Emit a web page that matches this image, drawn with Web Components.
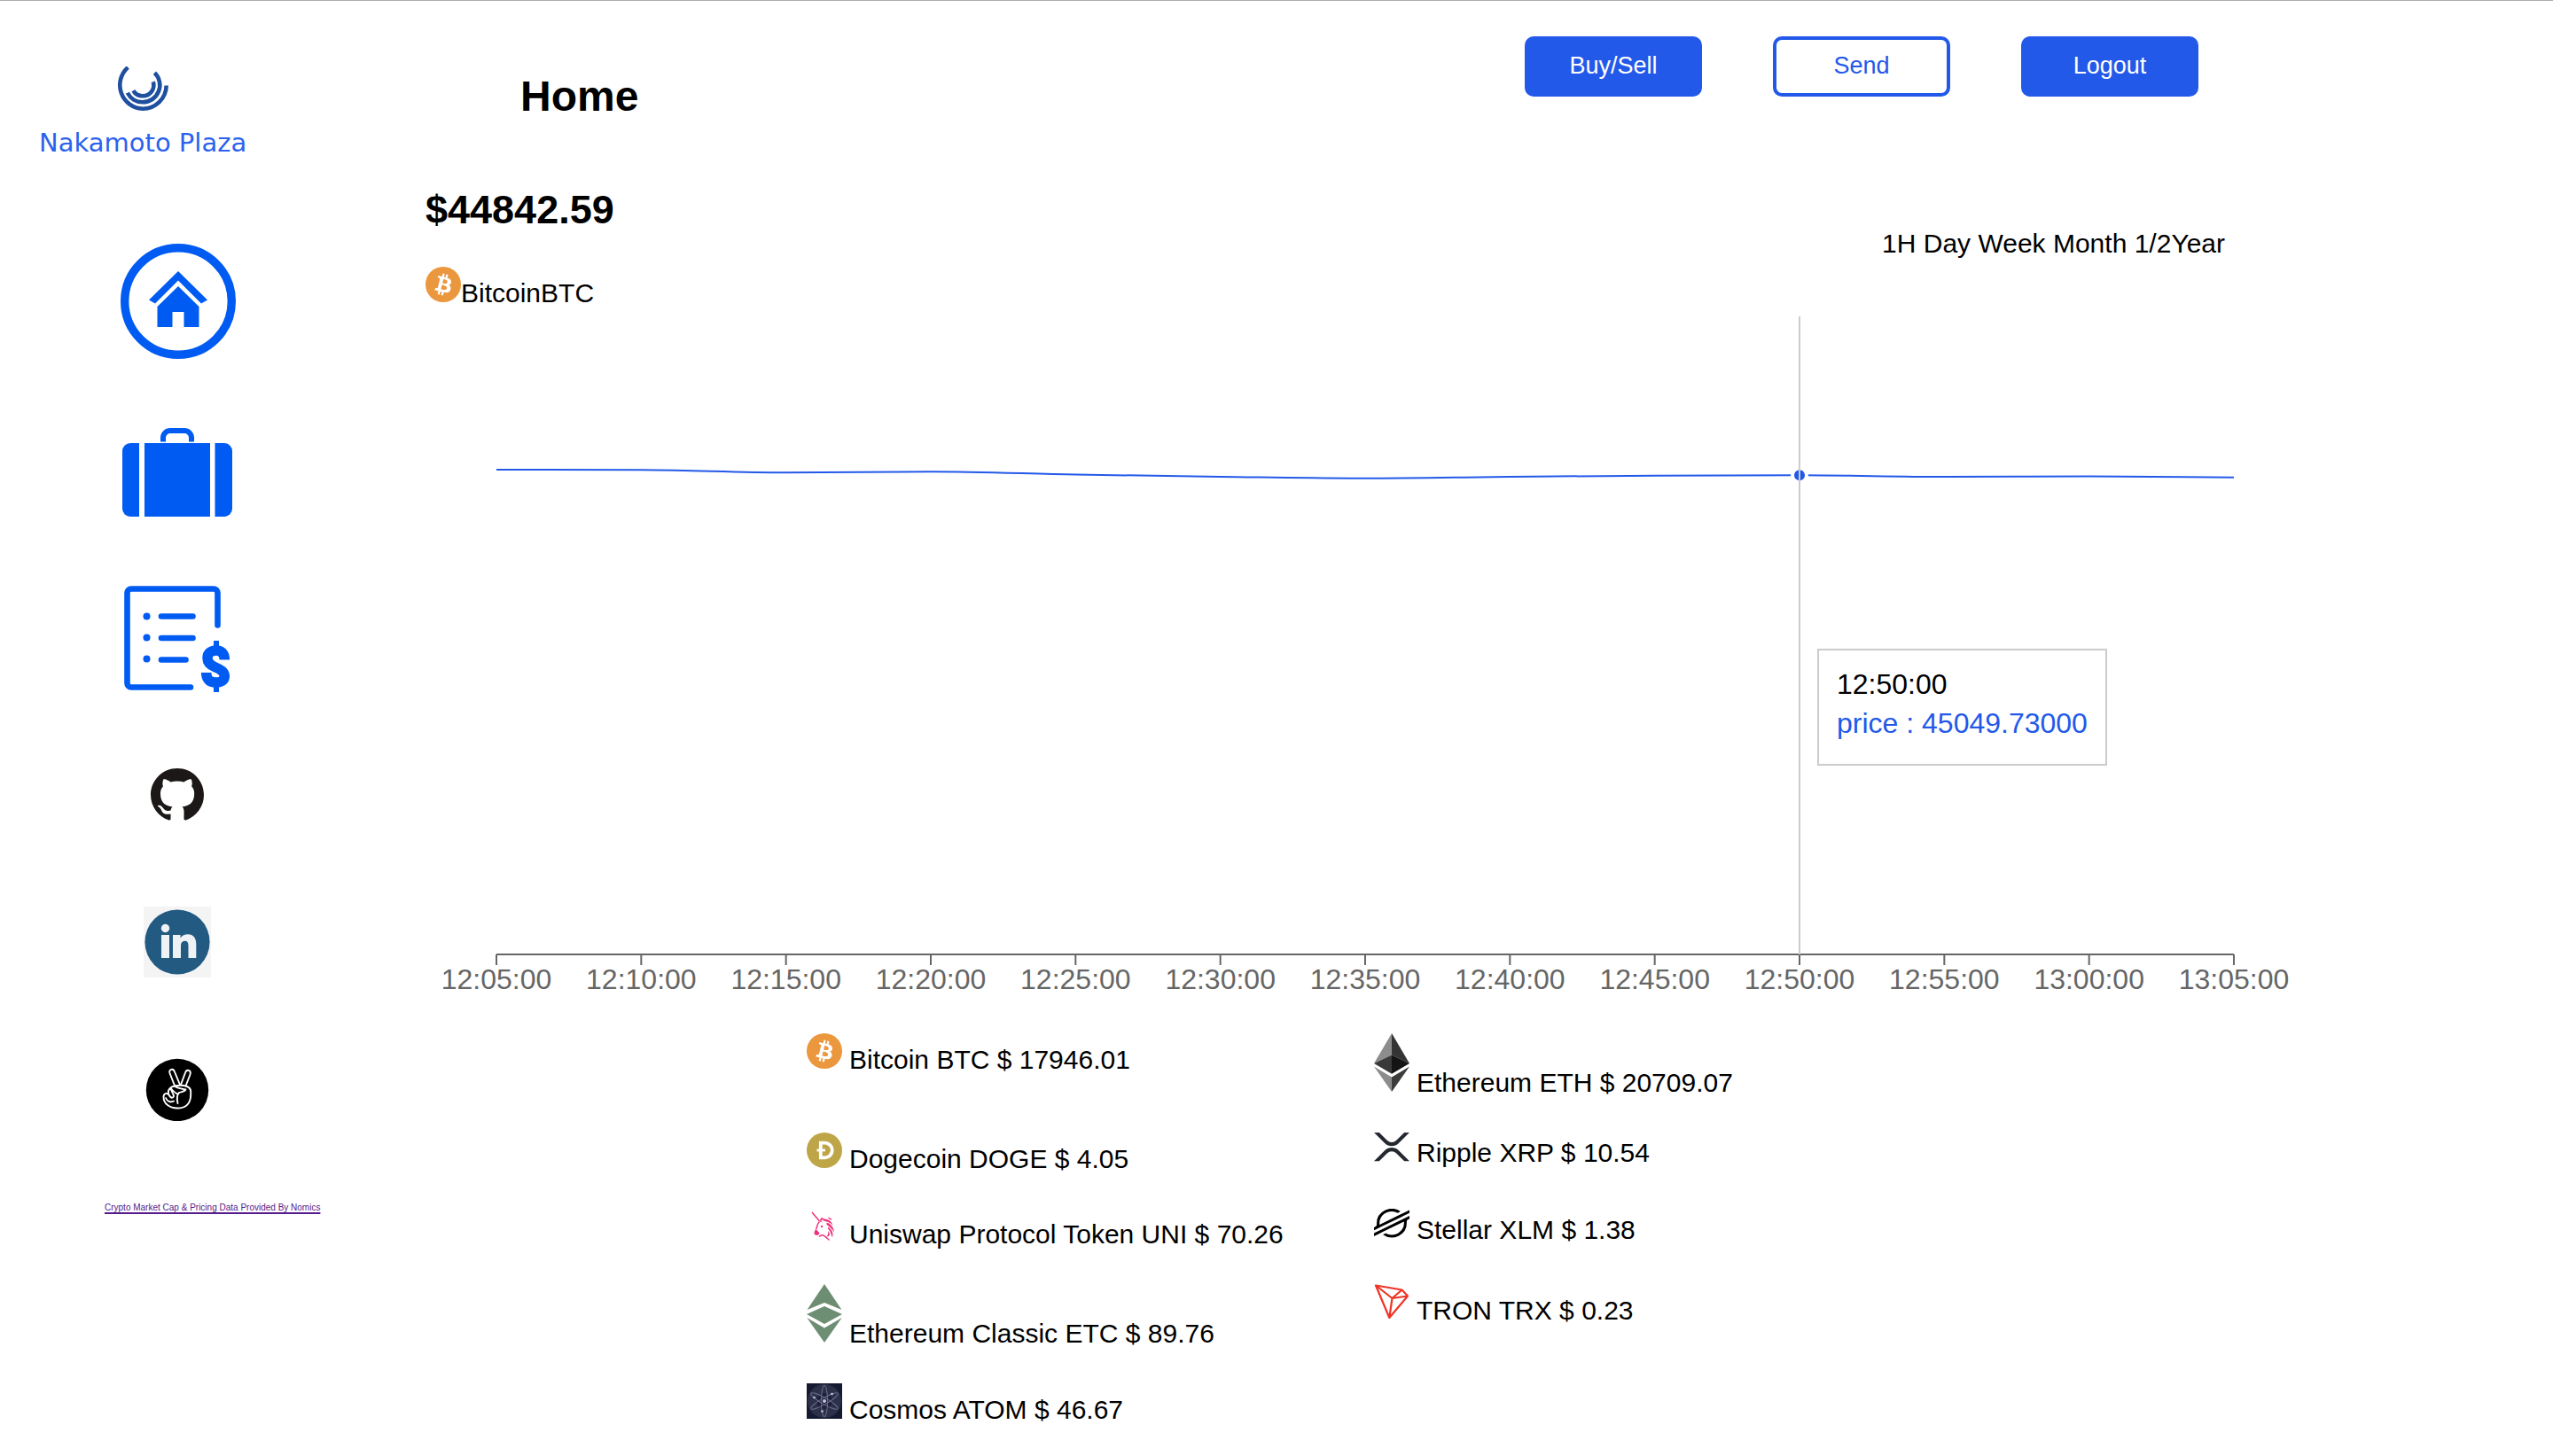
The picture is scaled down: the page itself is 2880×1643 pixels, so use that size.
<!DOCTYPE html>
<html lang="en">
<head>
<meta charset="utf-8">
<title>Nakamoto Plaza</title>
<style>
  html, body { margin: 0; background: #fff; }
  body { font-family: "Liberation Sans", Arial, sans-serif; color: #000; }
</style>
</head>
<body>
<np-app></np-app>

<script>
const ICONS = {
  logo: [58, 50, `<g fill="none" stroke="#1f4f9f" stroke-width="4.6"><path d="M12.300 1A26.700 26.700 0 0 0 29 47.700A26.700 26.700 0 0 0 55.700 21.500"/><path d="M11.800 29.800A19.300 19.300 0 0 0 29 40.300A19.300 19.300 0 0 0 42.400 7.100"/><path d="M18.300 27.300A12.300 12.300 0 0 0 29 33.300A12.300 12.300 0 0 0 40.800 17.300"/></g>`],
  home: [132, 130, `<g transform="translate(2 0)"><circle cx="65" cy="65" r="60.300" fill="none" stroke="#005bf3" stroke-width="9.400"/><g fill="#005bf3"><path d="M65 31 98 63.500 91 67.500 65 41.500 39 67.500 32 63.500Z"/><path d="M65 48 88.500 71V94H71.500V77H58.500V94H41.500V71Z"/></g></g>`],
  portfolio: [124, 100, `<g fill="#005bf3"><path d="M9 17H19V100H9a9 9 0 0 1-9-9V26a9 9 0 0 1 9-9Z"/><path d="M25 17H99V100H25Z"/><path d="M104.500 17H115a9 9 0 0 1 9 9V91a9 9 0 0 1-9 9H104.500Z"/></g><path d="M46 15.500V11a8 8 0 0 1 8-8H70a8 8 0 0 1 8 8V15.500" fill="none" stroke="#005bf3" stroke-width="6"/>`],
  ledger: [124, 120, `<g fill="none" stroke="#005bf3" stroke-width="6.600" stroke-linecap="round"><path d="M107.500 44.500V8a4.500 4.500 0 0 0-4.500-4.500H10A4.500 4.500 0 0 0 5.500 8V110a4.500 4.500 0 0 0 4.500 4.500H77"/><path d="M44 34.500H79.500M44 59H79.500M44 83.500H71.500"/></g><g fill="#005bf3"><circle cx="27.500" cy="34.500" r="4"/><circle cx="27.500" cy="58.500" r="4"/><circle cx="27.500" cy="82.500" r="4"/><path d="M103 62H109V70H103ZM103 111H109V120H103Z"/></g><path d="M115.300 83.500C115.300 76 111 73 106 73C99.500 73 96 76.500 96 81.500C96 87.500 100 90 105 92C111 94.500 115.300 97 115.300 102C115.300 107 111 109 105.500 109C98.500 109 94.700 105.500 94.700 98" fill="none" stroke="#005bf3" stroke-width="11.500"/>`],
  github: [76, 86, `<path transform="translate(8 8) scale(3.75)" fill="#1b1817" d="M8 0C3.58 0 0 3.58 0 8c0 3.54 2.29 6.53 5.47 7.59.4.07.55-.17.55-.38 0-.19-.01-.82-.01-1.49-2.01.37-2.53-.49-2.69-.94-.09-.23-.48-.94-.82-1.13-.28-.15-.68-.52-.01-.53.63-.01 1.08.58 1.23.82.72 1.21 1.87.87 2.33.66.07-.52.28-.87.51-1.07-1.78-.2-3.64-.89-3.64-3.95 0-.87.31-1.59.82-2.15-.08-.2-.36-1.02.08-2.12 0 0 .67-.21 2.2.82.64-.18 1.32-.27 2-.27s1.36.09 2 .27c1.53-1.04 2.2-.82 2.2-.82.44 1.1.16 1.92.08 2.12.51.56.82 1.27.82 2.15 0 3.07-1.87 3.75-3.65 3.95.29.25.54.73.54 1.48 0 1.07-.01 1.93-.01 2.2 0 .21.15.46.55.38A8.01 8.01 0 0 0 16 8c0-4.42-3.58-8-8-8z"/>`],
  linkedin: [76, 80, `<rect width="76" height="80" fill="#f4f4f4"/><circle cx="38" cy="40" r="36.600" fill="#225a82"/><g fill="#eff2f4"><circle cx="24.500" cy="24.500" r="4.700"/><rect x="20" y="32" width="9" height="26"/><path d="M33 32H41.500V35.500C43.500 32.500 46.500 31.300 50 31.300C56 31.300 59.300 35.500 59.300 42.500V58H50.500V44C50.500 40.500 49.200 38.700 46.500 38.700C43.500 38.700 42 40.800 42 44V58H33Z"/></g>`],
  peace: [76, 84, `<circle cx="38" cy="49" r="35.200" fill="#000"/><g fill="none" stroke="#fff" stroke-width="1.900" stroke-linecap="round" stroke-linejoin="round"><path d="M35 44 29.500 30C28 25.500 33.500 24 35 28.500L41 43"/><path d="M42 43 47 29.500C48.500 25 54 26.500 52.500 31.500L47.500 44.500"/><path d="M35 44.500C40 43.500 45 43.500 49 45C54 47 53.500 51 53 57C52 65.500 46 69.500 38 69.500C29.500 69.500 22.500 64.500 22.500 57C22.500 52.500 26 52 28 54"/><path d="M35 44.500C38 47 42 47.500 47.500 48.500C47 50.500 43 51 40 52C37.500 55 37.500 60 38.500 64"/><path d="M35 44.500C31 45 27 48 28 53C29.500 58 33 59 34 56C34 53 31 50.500 31 47.500"/><path d="M31 47.500C34 51 37 53 38.500 53.500"/><path d="M25 58C26.500 61.500 30 63.500 34 61.500"/></g>`],
  btc: [40, 40, `<circle cx="20" cy="20" r="20" fill="#eb973d"/><path transform="scale(1.25)" fill="#fff" d="M23.189 14.020c.314-2.096-1.283-3.223-3.465-3.975l.708-2.840-1.728-.430-.690 2.765c-.454-.114-.920-.220-1.385-.326l.695-2.783L15.596 6l-.708 2.839c-.376-.086-.746-.170-1.104-.260l.002-.009-2.384-.595-.460 1.846s1.283.294 1.256.312c.700.175.826.638.805 1.006l-.806 3.235c.048.012.110.030.180.057l-.183-.045-1.130 4.532c-.086.212-.303.531-.793.410.018.025-1.256-.313-1.256-.313l-.858 1.978 2.250.561c.418.105.828.215 1.231.318l-.715 2.872 1.727.430.708-2.840c.472.127.930.245 1.378.357l-.706 2.828 1.728.430.715-2.866c2.948.558 5.164.333 6.097-2.333.752-2.146-.037-3.385-1.588-4.192 1.130-.260 1.980-1.003 2.207-2.538zm-3.950 5.538c-.533 2.147-4.148.986-5.320.695l.950-3.805c1.172.293 4.929.872 4.370 3.110zm.535-5.569c-.487 1.953-3.495.960-4.470.717l.860-3.450c.975.243 4.118.696 3.610 2.733z"/>`],
  doge: [40, 40, `<circle cx="20" cy="20" r="20" fill="#bea547"/><path d="M15.800 11.700H20.500A8.300 8.300 0 0 1 20.500 28.300H15.800Z" fill="none" stroke="#fff" stroke-width="3.800"/><path d="M11.500 20H21" stroke="#fff" stroke-width="2.800"/>`],
  uni: [40, 39, `<path d="M6 4 14.500 14M16 15C15.500 10.500 18 9.500 18.500 13M14.500 14.500C11 17.500 12.500 20 10.500 23M14 31.500C17 28.500 19 30 21 31.500C22.500 33 24 34 25.500 35.500" fill="none" stroke="#f0337e" stroke-width="1.500"/><g fill="#f0337e"><path d="M10.500 23 14.500 27.500C14 29.500 12 30.500 9.500 29.500C7.800 28 8.500 25 10.500 23Z"/><path d="M19 11.500C24 11.500 28 14 29.500 18.500C26 15 22.500 14.500 19 13.500Z"/><path d="M22.500 15.500C27.500 17 30.500 21 31 26.500C28.500 22.500 25.500 20 22.500 18Z"/><path d="M24 20.500C28 23 30.500 27 29 32C27.500 30.500 28 26.500 24 22.500Z"/><path d="M24 25C27 28 26.500 31.500 22 31.500C24.500 29.500 24.500 27.500 24 25Z"/><circle cx="17" cy="20" r="1.200"/></g><path d="M24.500 10 28 12.500" stroke="#f0337e" stroke-width="1.500"/>`],
  etc: [40, 66, `<g fill="#6e8e74"><path d="M20 0 39.500 29 20 21 .5 29Z"/><path d="M20 25 40 34 20 45 0 34Z"/><path d="M.3 38 20 49.500 39.700 38 20 66Z"/></g>`],
  atom: [40, 40, `<rect width="40" height="40" fill="#161a31"/><circle cx="20" cy="20" r="19" fill="#2d3049"/><circle cx="20" cy="20" r="9" fill="#1c2038"/><g fill="none" stroke="#676a8b" stroke-width="1.100"><ellipse cx="20" cy="20" rx="3.600" ry="17.500"/><ellipse cx="20" cy="20" rx="3.600" ry="17.500" transform="rotate(60 20 20)"/><ellipse cx="20" cy="20" rx="3.600" ry="17.500" transform="rotate(120 20 20)"/></g><g fill="#c5c7d8"><circle cx="20" cy="20" r="2"/><circle cx="8.500" cy="16" r="1.300"/><circle cx="28.500" cy="12" r="1.300"/><circle cx="17.500" cy="31.500" r="1.300"/></g>`],
  eth: [40, 66, `<path d="M20 0V24.500L0 34Z" fill="#8c8c8c"/><path d="M20 0V24.500L40 34Z" fill="#343434"/><path d="M0 34 20 24.500V45.700Z" fill="#393939"/><path d="M40 34 20 24.500V45.700Z" fill="#141414"/><path d="M0 37.500 20 49.500V66Z" fill="#8c8c8c"/><path d="M40 37.500 20 49.500V66Z" fill="#3c3c3b"/>`],
  xrp: [40, 33, `<g transform="scale(.078125)" fill="#23292f"><path d="M437 0h74L357 152.480c-55.770 55.190-146.190 55.190-202 0L.94 0H75L192 115.830a91.110 91.110 0 0 0 127.910 0Z"/><path d="M74.050 414H0L155 260.580c55.770-55.190 146.190-55.190 202 0L512 414H438L320 297.230a91.110 91.110 0 0 0-127.910 0Z"/></g>`],
  xlm: [40, 34, `<path transform="scale(.1692 .162)" d="M203 26.160l-28.460 14.500-137.430 70a82.490 82.490 0 0 1-.700-10.690A81.870 81.870 0 0 1 158.200 28.600l16.290-8.300 2.430-1.240A100 100 0 0 0 18.180 100q0 3.820.290 7.610a18.190 18.190 0 0 1-9.880 17.580L0 129.570V150l25.290-12.890 8.190-4.180 8.070-4.110L186.430 55l16.280-8.290 33.650-17.150V9.140ZM236.360 50 49.780 145 33.500 153.310 0 170.380v20.410l33.270-16.950 28.460-14.500L199.300 89.240A83.450 83.450 0 0 1 200 100 81.870 81.870 0 0 1 78.090 171.360l-1 .530-17.660 9A100 100 0 0 0 218.180 100c0-2.570-.100-5.140-.290-7.680a18.200 18.200 0 0 1 9.870-17.580l8.600-4.380Z"/>`],
  trx: [40, 40, `<path d="M2 1.500 31.500 6.500 38 13.500 17.300 38ZM2 1.500 20.500 16 17.300 38M20.500 16 31.500 6.500M20.500 16 38 13.500" fill="none" stroke="#ee3527" stroke-width="2.200" stroke-linejoin="round"/>`]
};

const define = (name, render) => customElements.define(name, class extends HTMLElement {
  connectedCallback() {
    if (this.shadowRoot) return;
    this.attachShadow({ mode: "open" }).innerHTML = render(this);
  }
});

define("np-icon", el => {
  const [w, h, art] = ICONS[el.getAttribute("name")];
  return `<style>:host{display:block;flex:none}svg{display:block}</style>
    <svg width="${w}" height="${h}" viewBox="0 0 ${w} ${h}" aria-hidden="true">${art}</svg>`;
});

define("np-button", el => `
  <style>
    :host { display: block; }
    button { box-sizing: border-box; width: 200px; height: 68px; padding: 0 0 2px; border: 4px solid #2359e9;
      border-radius: 10px; background: #2359e9; color: #fff; font: 27px "Liberation Sans", Arial, sans-serif; cursor: pointer; }
    :host([outline]) button { background: #fff; color: #2359e9; }
  </style>
  <button type="button"><slot></slot></button>`);

define("np-coin", el => `
  <style>
    :host { display: flex; align-items: flex-end; gap: 8px; font-size: 30px; line-height: 33px; white-space: nowrap; }
    :host([tight]) { gap: 0; }
    /* the icon stands on the text baseline, 6px above the line's bottom */
    np-icon { padding-bottom: 6px; }
  </style>
  <np-icon name="${el.getAttribute("icon")}"></np-icon><span><slot></slot></span>`);

define("np-sidebar", () => {
  const link = (icon, label) => `<a class="icon" href="#${icon}" aria-label="${label}"><np-icon name="${icon}"></np-icon></a>`;
  return `
  <style>
    :host { display: flex; flex-direction: column; gap: 98px; padding-top: 74px; }
    .brand { display: flex; flex-direction: column; align-items: center; align-self: flex-start; gap: 20px;
      margin-left: 44px; font: 29px/32px "DejaVu Sans", sans-serif; color: #2b62ee; white-space: nowrap; }
    nav { display: flex; flex-direction: column; gap: 78px; }
    .icon { display: block; align-self: center; }
    .credit { margin-left: 118px; align-self: flex-start; font-size: 10px; line-height: 40px; color: #551a8b;
      text-decoration-thickness: 2px; text-underline-offset: 2px; white-space: nowrap; }
  </style>
  <div class="brand"><np-icon name="logo"></np-icon><span>Nakamoto Plaza</span></div>
  <nav>
    ${link("home", "Home")}${link("portfolio", "Portfolio")}${link("ledger", "Transactions")}
    ${link("github", "GitHub")}${link("linkedin", "LinkedIn")}${link("peace", "AngelList")}
    <a class="credit" href="#nomics">Crypto Market Cap &amp; Pricing Data Provided By Nomics</a>
  </nav>`;
});

define("np-chart", () => {
  const left = 80, width = 1960, axis = 730;
  const ys = [183, 183.3, 186.3, 185.3, 188.5, 191, 192.8, 191, 189.7, 189.3, 191, 190.5, 191.8];
  const xs = ys.map((_, i) => left + width * i / (ys.length - 1));
  const dx = width / (ys.length - 1);
  // monotone cubic interpolation: flat tangents at local extremes
  const slopes = ys.map((y, i) => {
    if (i === 0) return (ys[1] - y) / dx;
    if (i === ys.length - 1) return (y - ys[i - 1]) / dx;
    const a = (y - ys[i - 1]) / dx, b = (ys[i + 1] - y) / dx;
    return a * b <= 0 ? 0 : 2 * a * b / (a + b);
  });
  let d = `M${xs[0]} ${ys[0]}`;
  for (let i = 1; i < ys.length; i++)
    d += `C${xs[i - 1] + dx / 3} ${ys[i - 1] + slopes[i - 1] * dx / 3} ${xs[i] - dx / 3} ${ys[i] - slopes[i] * dx / 3} ${xs[i]} ${ys[i]}`;
  const ticks = xs.map((x, i) => {
    const m = 5 + i * 5, label = `${12 + Math.floor(m / 60)}:${String(m % 60).padStart(2, "0")}:00`;
    return `<path d="M${x} ${axis}v12" stroke="#666" stroke-width="2"/><text x="${x}" y="769">${label}</text>`;
  }).join("");
  return `
  <style>
    :host { display: block; position: relative; }
    svg { display: block; width: 100%; height: auto; overflow: visible; }
    text { font-size: 32px; fill: #666; text-anchor: middle; }
    .tip { position: absolute; left: calc(100% * 1570 / 2100); top: calc(100% * 385 / 800); padding: 20px;
      border: 2px solid #ccc; background: #fff; font-size: 32px; line-height: 36px; white-space: nowrap; }
    .tip p { margin: 0; }
    .tip .price { padding: 8px 0; color: #2359e9; }
  </style>
  <svg viewBox="0 0 2100 800" role="img" aria-label="Bitcoin price">
    <path d="M${left} ${axis}H${left + width}" stroke="#666" stroke-width="2"/>
    ${ticks}
    <path d="${d}" fill="none" stroke="#2359e9" stroke-width="2"/>
    <circle cx="1550" cy="189.3" r="8" fill="#2359e9" stroke="#fff" stroke-width="4"/>
    <path d="M1550 10V${axis}" stroke="#ccc" stroke-width="2"/>
  </svg>
  <div class="tip"><p>12:50:00</p><p class="price">price : 45049.73000</p></div>`;
});

define("np-ranges", () => `
  <style>
    :host { display: block; font-size: 30px; line-height: 33px; white-space: nowrap; }
    button { padding: 0; border: 0; background: none; font: inherit; color: inherit; cursor: pointer; }
  </style>
  <button type="button">1H</button> <button type="button">Day</button> <button type="button">Week</button> <button type="button">Month</button> <button type="button">1/2Year</button>`);

define("np-app", () => `
  <style>
    :host { display: grid; grid-template-columns: 20fr 4fr 105fr 15fr; border-top: 1px solid #acacac; }
    main { grid-column: 3; min-width: 0; }
    header { display: flex; justify-content: space-between; align-items: flex-start; padding: 40px 100px 0 107px; }
    h1 { margin: 40px 0 0; font-size: 48px; line-height: 56px; }
    .actions { display: flex; gap: 80px; }
    .summary { display: flex; justify-content: space-between; align-items: flex-start; padding: 74px 70px 0 0; }
    h2 { margin: 0 0 38px; font-size: 45px; line-height: 52px; }
    np-ranges { margin-top: 47px; }
    .coins { display: grid; grid-template-columns: 64fr 103fr; row-gap: 40px; align-items: start;
      padding: 19px 0 20px calc(100% * 43 / 210); }
  </style>
  <np-sidebar></np-sidebar>
  <main>
    <header>
      <h1>Home</h1>
      <div class="actions">
        <np-button>Buy/Sell</np-button><np-button outline>Send</np-button><np-button>Logout</np-button>
      </div>
    </header>
    <section class="summary">
      <div><h2>$44842.59</h2><np-coin icon="btc" tight>BitcoinBTC</np-coin></div>
      <np-ranges></np-ranges>
    </section>
    <np-chart></np-chart>
    <section class="coins">
      <np-coin icon="btc">Bitcoin BTC $ 17946.01</np-coin><np-coin icon="eth">Ethereum ETH $ 20709.07</np-coin>
      <np-coin icon="doge">Dogecoin DOGE $ 4.05</np-coin><np-coin icon="xrp">Ripple XRP $ 10.54</np-coin>
      <np-coin icon="uni">Uniswap Protocol Token UNI $ 70.26</np-coin><np-coin icon="xlm">Stellar XLM $ 1.38</np-coin>
      <np-coin icon="etc">Ethereum Classic ETC $ 89.76</np-coin><np-coin icon="trx">TRON TRX $ 0.23</np-coin>
      <np-coin icon="atom">Cosmos ATOM $ 46.67</np-coin>
    </section>
  </main>`);
</script>
</body>
</html>
